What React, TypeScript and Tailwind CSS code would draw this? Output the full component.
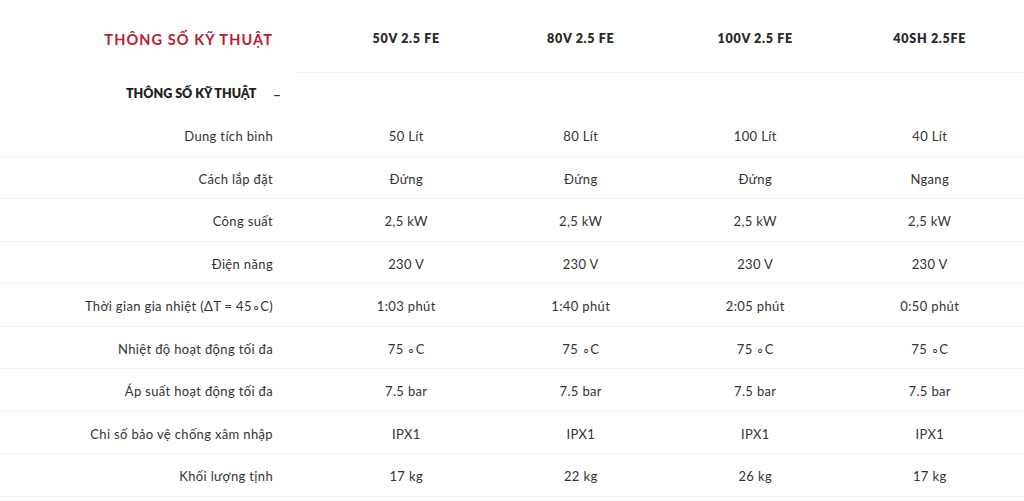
import React from 'react';

const models = ['50V 2.5 FE', '80V 2.5 FE', '100V 2.5 FE', '40SH 2.5FE'];

const specs: { label: string; values: string[] }[] = [
    { label: 'Dung tích bình', values: ['50 Lít', '80 Lít', '100 Lít', '40 Lít'] },
    { label: 'Cách lắp đặt', values: ['Đứng', 'Đứng', 'Đứng', 'Ngang'] },
    { label: 'Công suất', values: ['2,5 kW', '2,5 kW', '2,5 kW', '2,5 kW'] },
    { label: 'Điện năng', values: ['230 V', '230 V', '230 V', '230 V'] },
    { label: 'Thời gian gia nhiệt (ΔT = 45∘C)', values: ['1:03 phút', '1:40 phút', '2:05 phút', '0:50 phút'] },
    { label: 'Nhiệt độ hoạt động tối đa', values: ['75 ∘C', '75 ∘C', '75 ∘C', '75 ∘C'] },
    { label: 'Áp suất hoạt động tối đa', values: ['7.5 bar', '7.5 bar', '7.5 bar', '7.5 bar'] },
    { label: 'Chỉ số bảo vệ chống xâm nhập', values: ['IPX1', 'IPX1', 'IPX1', 'IPX1'] },
    { label: 'Khối lượng tịnh', values: ['17 kg', '22 kg', '26 kg', '17 kg'] },
];

const App: React.FC = () => {
    return (
        <div className="w-[1024px] h-[501px] overflow-hidden bg-white font-['Lato','Liberation_Sans',sans-serif] text-[#333]">
            {/* header */}
            <div className="flex h-[72px] items-center pt-[7px]">
                <div className="w-[319px] pr-[46px] text-right text-[14.5px] font-bold tracking-[1.1px] text-[#b71c33]">
                    THÔNG SỐ KỸ THUẬT
                </div>
                {models.map(m => (
                    <div key={m} className="w-[174.5px] text-center text-[12.5px] font-extrabold tracking-[0.7px] text-[#2a2a2a]">
                        {m}
                    </div>
                ))}
            </div>
            <div className="ml-[295px] h-px bg-[#f4f4f4]" />

            {/* section title */}
            <div className="flex h-[41px] items-center pt-[2px]">
                <div className="w-[126px] shrink-0" />
                <div className="w-[147px] shrink-0 whitespace-nowrap text-[12.5px] font-extrabold text-[#222]">THÔNG SỐ KỸ THUẬT</div>
                <span className="text-[14px] font-bold leading-none text-[#333]">–</span>
            </div>

            {/* rows */}
            {specs.map(row => (
                <div key={row.label} className="flex h-[42.5px] items-center border-b border-[#f3f3f3] pt-[4px] text-[13px] tracking-[0.35px]">
                    <div className="w-[319px] pr-[46px] text-right">{row.label}</div>
                    {row.values.map((v, i) => (
                        <div key={i} className="w-[174.5px] text-center">{v}</div>
                    ))}
                </div>
            ))}
        </div>
    );
};

export default App;
